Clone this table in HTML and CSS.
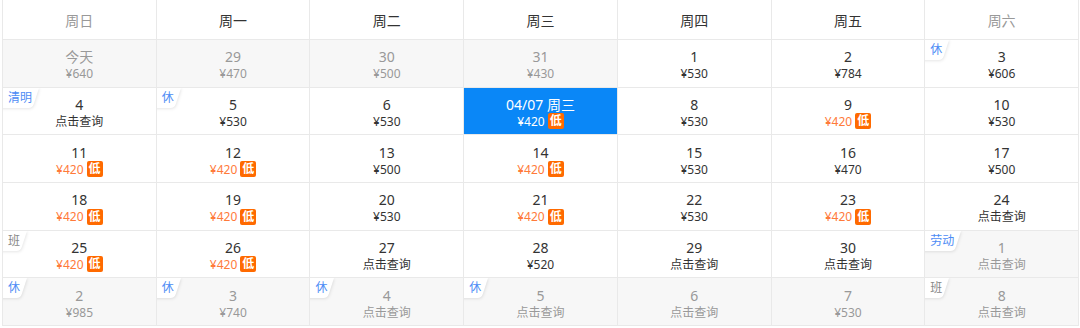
FILE: index.html
```html
<!DOCTYPE html>
<html lang="zh">
<head>
<meta charset="utf-8">
<link rel="stylesheet" href="styles.css">
</head>
<body>
<div class="cal">
  <div class="hd muted">周日</div>
  <div class="hd">周一</div>
  <div class="hd">周二</div>
  <div class="hd">周三</div>
  <div class="hd">周四</div>
  <div class="hd">周五</div>
  <div class="hd muted">周六</div>

  <div class="cell past"><div class="d">今天</div><div class="p">¥640</div></div>
  <div class="cell past"><div class="d">29</div><div class="p">¥470</div></div>
  <div class="cell past"><div class="d">30</div><div class="p">¥500</div></div>
  <div class="cell past"><div class="d">31</div><div class="p">¥430</div></div>
  <div class="cell"><div class="d">1</div><div class="p">¥530</div></div>
  <div class="cell"><div class="d">2</div><div class="p">¥784</div></div>
  <div class="cell"><span class="tag rest">休</span><div class="d">3</div><div class="p">¥606</div></div>

  <div class="cell"><span class="tag rest">清明</span><div class="d">4</div><div class="p">点击查询</div></div>
  <div class="cell"><span class="tag rest">休</span><div class="d">5</div><div class="p">¥530</div></div>
  <div class="cell"><div class="d">6</div><div class="p">¥530</div></div>
  <div class="cell sel"><div class="d">04/07 周三</div><div class="p">¥420<span class="low">低</span></div></div>
  <div class="cell"><div class="d">8</div><div class="p">¥530</div></div>
  <div class="cell"><div class="d">9</div><div class="p cheap">¥420<span class="low">低</span></div></div>
  <div class="cell"><div class="d">10</div><div class="p">¥530</div></div>

  <div class="cell"><div class="d">11</div><div class="p cheap">¥420<span class="low">低</span></div></div>
  <div class="cell"><div class="d">12</div><div class="p cheap">¥420<span class="low">低</span></div></div>
  <div class="cell"><div class="d">13</div><div class="p">¥500</div></div>
  <div class="cell"><div class="d">14</div><div class="p cheap">¥420<span class="low">低</span></div></div>
  <div class="cell"><div class="d">15</div><div class="p">¥530</div></div>
  <div class="cell"><div class="d">16</div><div class="p">¥470</div></div>
  <div class="cell"><div class="d">17</div><div class="p">¥500</div></div>

  <div class="cell"><div class="d">18</div><div class="p cheap">¥420<span class="low">低</span></div></div>
  <div class="cell"><div class="d">19</div><div class="p cheap">¥420<span class="low">低</span></div></div>
  <div class="cell"><div class="d">20</div><div class="p">¥530</div></div>
  <div class="cell"><div class="d">21</div><div class="p cheap">¥420<span class="low">低</span></div></div>
  <div class="cell"><div class="d">22</div><div class="p">¥530</div></div>
  <div class="cell"><div class="d">23</div><div class="p cheap">¥420<span class="low">低</span></div></div>
  <div class="cell"><div class="d">24</div><div class="p">点击查询</div></div>

  <div class="cell"><span class="tag work">班</span><div class="d">25</div><div class="p cheap">¥420<span class="low">低</span></div></div>
  <div class="cell"><div class="d">26</div><div class="p cheap">¥420<span class="low">低</span></div></div>
  <div class="cell"><div class="d">27</div><div class="p">点击查询</div></div>
  <div class="cell"><div class="d">28</div><div class="p">¥520</div></div>
  <div class="cell"><div class="d">29</div><div class="p">点击查询</div></div>
  <div class="cell"><div class="d">30</div><div class="p">点击查询</div></div>
  <div class="cell past"><span class="tag rest">劳动</span><div class="d">1</div><div class="p">点击查询</div></div>

  <div class="cell past"><span class="tag rest">休</span><div class="d">2</div><div class="p">¥985</div></div>
  <div class="cell past"><span class="tag rest">休</span><div class="d">3</div><div class="p">¥740</div></div>
  <div class="cell past"><span class="tag rest">休</span><div class="d">4</div><div class="p">点击查询</div></div>
  <div class="cell past"><span class="tag rest">休</span><div class="d">5</div><div class="p">点击查询</div></div>
  <div class="cell past"><div class="d">6</div><div class="p">点击查询</div></div>
  <div class="cell past"><div class="d">7</div><div class="p">¥530</div></div>
  <div class="cell past"><span class="tag work">班</span><div class="d">8</div><div class="p">点击查询</div></div>
</div>
</body>
</html>
```

FILE: styles.css
```css
html, body {
  margin: 0;
  padding: 0;
  background: #fff;
}
body {
  font-family: "Noto Sans", "Noto Sans CJK SC", sans-serif;
  color: #333;
}
.cal {
  margin-left: 2px;
  width: 1077px;
  height: 326px;
  box-sizing: border-box;
  border-left: 1px solid #e9e9e9;
  display: grid;
  grid-template-columns: repeat(7, 1fr);
  grid-template-rows: 40px repeat(6, 1fr);
}
.hd {
  display: flex;
  align-items: center;
  justify-content: center;
  font-size: 14px;
  color: #333;
  border-right: 1px solid #e9e9e9;
  border-bottom: 1px solid #e9e9e9;
  padding-top: 1px;
}
.hd.muted {
  color: #999;
}
.cell {
  position: relative;
  overflow: hidden;
  display: flex;
  flex-direction: column;
  align-items: center;
  justify-content: center;
  border-right: 1px solid #e9e9e9;
  border-bottom: 1px solid #e9e9e9;
  padding-top: 4px;
  background: #fff;
}
.cell .d {
  font-size: 14px;
  line-height: 17px;
  color: #333;
}
.cell .p {
  display: flex;
  align-items: center;
  font-size: 12px;
  line-height: 17px;
  color: #333;
}
.cell .p.cheap {
  color: #ff7a3a;
}
.low {
  display: inline-flex;
  align-items: center;
  justify-content: center;
  width: 16px;
  height: 16px;
  margin-left: 3px;
  border-radius: 2px;
  background: #ff6a00;
  color: #fff;
  font-size: 12px;
  font-weight: bold;
  line-height: 16px;
}
.cell.past {
  background: #f7f7f7;
}
.cell.past .d,
.cell.past .p {
  color: #999;
}
.cell.sel {
  background: #0a87f7;
}
.cell.sel .d,
.cell.sel .p {
  color: #fff;
}
.tag {
  position: absolute;
  top: 0;
  left: 0;
  height: 20px;
  padding: 0 9px 0 5px;
  font-size: 12px;
  line-height: 19px;
  z-index: 0;
}
.tag::before {
  content: "";
  position: absolute;
  top: 0;
  bottom: 0;
  left: -8px;
  right: 2px;
  background: #fff;
  transform: skewX(-18deg);
  transform-origin: top left;
  border-bottom-right-radius: 4px;
  box-shadow: 1px 1px 3px rgba(0, 0, 0, 0.1);
  z-index: -1;
}
.tag.rest {
  color: #4d8cf5;
}
.tag.work {
  color: #888;
}
```
